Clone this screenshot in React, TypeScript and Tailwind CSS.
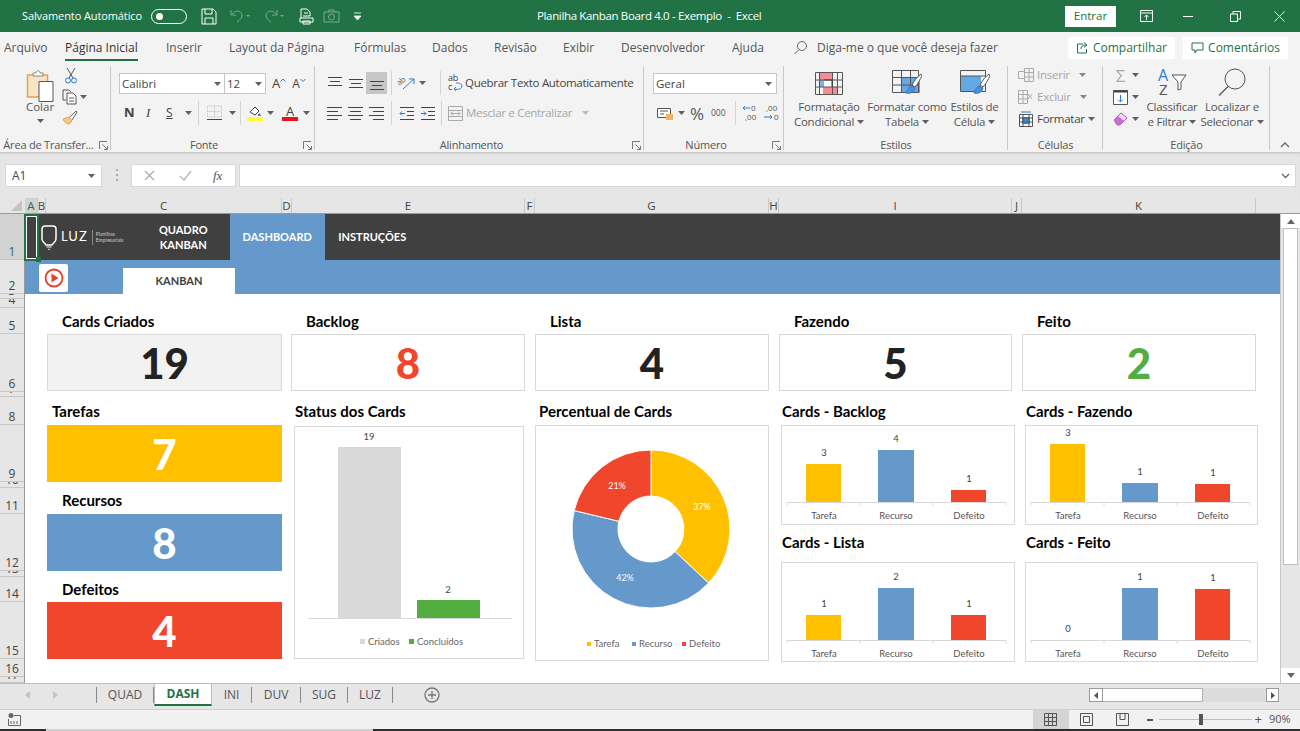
import type { ReactNode } from "react";

const BLUE = "#6598cb";
const YELLOW = "#ffc000";
const RED = "#f0462c";
const GREEN = "#52ae3e";

function Caret({ color = "#5f5f5f" }: { color?: string }) {
  return (
    <svg width="7" height="4" viewBox="0 0 7 4" className="shrink-0">
      <path d="M0 0h7L3.5 4z" fill={color} />
    </svg>
  );
}

function Launcher() {
  return (
    <svg width="9" height="9" viewBox="0 0 9 9" className="shrink-0">
      <path d="M.5 8V.5H8M5 8.5h3.5V5M3.5 3.5l4.5 4.5" fill="none" stroke="#777" />
    </svg>
  );
}

function AlignLeft() {
  return (
    <svg width="18" height="15" viewBox="0 0 18 15">
      <path d="M1 1.5h15M1 5.5h11M1 9.5h15M1 13.5h11" stroke="#444" fill="none" />
    </svg>
  );
}
function AlignCenter() {
  return (
    <svg width="18" height="15" viewBox="0 0 18 15">
      <path d="M1 1.5h15M3 5.5h11M1 9.5h15M3 13.5h11" stroke="#444" fill="none" />
    </svg>
  );
}
function AlignRight() {
  return (
    <svg width="18" height="15" viewBox="0 0 18 15">
      <path d="M1 1.5h15M5 5.5h11M1 9.5h15M5 13.5h11" stroke="#444" fill="none" />
    </svg>
  );
}

function Indent({ flip }: { flip?: boolean }) {
  return (
    <svg width="16" height="15" viewBox="0 0 16 15">
      <path d="M1 1.5h14M8 5.5h7M8 9.5h7M1 13.5h14" stroke="#444" fill="none" />
      <path d={flip ? "M1 7.5h5M4 5.5l2 2-2 2" : "M6 7.5H1M3 5.5l-2 2 2 2"} stroke="#2b7cd3" fill="none" />
    </svg>
  );
}

function CondFormatIcon() {
  return (
    <svg width="28" height="23" viewBox="0 0 28 23">
      <path d="M4 1h13v7H4zM8 15h14v7H8z" fill="#f58d97" />
      <path d="M4 8h5v7H4z" fill="#7cb2e4" />
      <path d="M9 8h8v7H9z" fill="#fff" />
      <path d="M.5.5h27v22H.5zM.5 8h27M.5 15h27M4.5.5v22M17.5.5v22M22.5.5v22" fill="none" stroke="#555" />
      <path d="M9 8h8v7" fill="none" stroke="#333" />
    </svg>
  );
}

function TableBrushIcon({ wide }: { wide?: boolean }) {
  return (
    <svg width="30" height="27" viewBox="0 0 30 27">
      <path d={wide ? "M1 6h20v16H1z" : "M10 7h18v16H10z"} fill="#66a8e6" />
      <path d={wide ? "M.5.5h25v21H.5zM.5 6h25" : "M.5.5h26v22H.5zM.5 7.5h26M.5 15h26M9.5.5v22M18.5.5v22"} fill="none" stroke="#555" />
      <path d="M29 4c-3 2-7 7-9 11l3 2c3-3 5-8 7-11z" fill="#fff" stroke="#555" />
      <path d="M19 16c-3 1-3 4-5 7 3 1 8 0 9-5z" fill="#4a90d9" stroke="#3a78b8" />
    </svg>
  );
}

function RibbonGroup({ label, w, pad, launcher, children }: { label: string; w: string; pad?: string; launcher?: boolean; children: ReactNode }) {
  return (
    <div className={`${w} relative flex h-full shrink-0 flex-col`}>
      <div className="h-[74px]">{children}</div>
      <div className={`flex h-[16px] items-center justify-center text-[11px] leading-none tracking-[-0.2px] whitespace-nowrap text-[#555] ${pad ?? ""}`}>{label}</div>
      {launcher && (
        <div className="absolute right-[3px] bottom-[2px]">
          <Launcher />
        </div>
      )}
      <div className="absolute top-[4px] right-0 bottom-[2px] w-px bg-[#c8c8c8]" />
    </div>
  );
}

function Sep() {
  return <div className="mx-[4px] h-[24px] w-px bg-[#d4d4d4]" />;
}

function BigButton({ icon, l1, l2, w }: { icon: ReactNode; l1: string; l2: string; w: string }) {
  return (
    <div className={`${w} flex flex-col items-center`}>
      <div className="flex h-[32px] items-center justify-center">{icon}</div>
      <div className="flex flex-col items-center text-[11.5px] leading-[15px] tracking-[-0.25px] whitespace-nowrap text-[#555]">
        <span>{l1}</span>
        <span className="flex items-center gap-[3px]">
          {l2}
          <Caret />
        </span>
      </div>
    </div>
  );
}

function TitleBar() {
  return (
    <div className="flex h-[32px] shrink-0 items-center bg-[#217346] text-white">
      <span className="ml-[22px] w-[129px] text-[11px] tracking-[-0.1px] whitespace-nowrap">Salvamento Automático</span>
      <div className="flex h-[15px] w-[36px] items-center rounded-full border border-white pl-[4px]">
        <div className="h-[7px] w-[7px] rounded-full bg-white" />
      </div>
      <svg width="16" height="17" viewBox="0 0 16 17" className="ml-[14px]">
        <path d="M1 1h11l3 3v12H1zM4 1v5h7V1M4 16v-6h8v6" fill="none" stroke="#fff" />
      </svg>
      <svg width="22" height="14" viewBox="0 0 22 14" className="ml-[12px] opacity-40">
        <path d="M3 5c3-4 9-4 10 1 0 3-2 5-5 7M2 1v5h5" fill="none" stroke="#fff" />
        <path d="M17 6h4l-2 2z" fill="#fff" />
      </svg>
      <svg width="22" height="14" viewBox="0 0 22 14" className="ml-[12px] opacity-40">
        <path d="M13 5C10 1 4 1 3 6c0 3 2 5 5 7M14 1v5H9" fill="none" stroke="#fff" />
        <path d="M17 6h4l-2 2z" fill="#fff" />
      </svg>
      <svg width="15" height="17" viewBox="0 0 15 17" className="ml-[14px]">
        <path d="M2 10V1h6l3 3v4M4 8h7M5 5h4" fill="none" stroke="#fff" />
        <path d="M1 10h13v4H1zM4 13h7v3H4z" fill="#217346" stroke="#fff" />
      </svg>
      <svg width="17" height="14" viewBox="0 0 17 14" className="ml-[9px] opacity-40">
        <path d="M1 3h15v10H1zM5 3l1-2h5l1 2" fill="none" stroke="#fff" />
        <circle cx="8.5" cy="8" r="3" fill="none" stroke="#fff" />
      </svg>
      <svg width="7" height="9" viewBox="0 0 7 9" className="ml-[14px]">
        <path d="M0 1h7M0 4h7l-3.5 4z" stroke="#fff" strokeWidth=".8" fill="#fff" />
      </svg>
      <div className="ml-[176px] w-[300px] text-[11.5px] tracking-[-0.35px] whitespace-pre">Planilha Kanban Board 4.0 - Exemplo  -  Excel</div>
      <div className="ml-[228px] flex h-[21px] w-[51px] items-center justify-center bg-white text-[11.5px] text-[#217346]">Entrar</div>
      <svg width="13" height="12" viewBox="0 0 13 12" className="ml-[24px]">
        <path d="M.5.5h12v11H.5zM.5 3h12M6.5 10V5M4.5 7l2-2 2 2" fill="none" stroke="#fff" />
      </svg>
      <div className="ml-[30px] h-px w-[10px] bg-white" />
      <svg width="11" height="11" viewBox="0 0 11 11" className="ml-[37px]">
        <path d="M.5 3h7v7.5h-7zM3 3V.5h7.5V8H8" fill="none" stroke="#fff" />
      </svg>
      <svg width="11" height="11" viewBox="0 0 11 11" className="ml-[33px]">
        <path d="M.5.5l10 10M10.5.5l-10 10" stroke="#fff" />
      </svg>
    </div>
  );
}

const tabs = [
  { name: "Arquivo", w: "w-[61px]" },
  { name: "Página Inicial", w: "w-[101px]", active: true },
  { name: "Inserir", w: "w-[63px]" },
  { name: "Layout da Página", w: "w-[125px]" },
  { name: "Fórmulas", w: "w-[78px]" },
  { name: "Dados", w: "w-[62px]" },
  { name: "Revisão", w: "w-[69px]" },
  { name: "Exibir", w: "w-[58px]" },
  { name: "Desenvolvedor", w: "w-[111px]" },
  { name: "Ajuda", w: "w-[61px]" },
];

function TabsBar() {
  return (
    <div className="flex h-[30px] shrink-0 items-center bg-[#f3f3f3] pt-[1px] pl-[4px] text-[12px] text-[#555]">
      {tabs.map((t) => (
        <div key={t.name} className={`${t.w} shrink-0`}>
          <span className={t.active ? "relative font-medium text-[#333]" : ""}>
            {t.name}
            {t.active && <span className="absolute right-0 -bottom-[5px] left-0 h-[2px] bg-[#217346]" />}
          </span>
        </div>
      ))}
      <svg width="15" height="15" viewBox="0 0 15 15" className="shrink-0">
        <circle cx="9" cy="6" r="4.5" fill="none" stroke="#666" />
        <path d="M6 9.5L1.5 14" stroke="#666" />
      </svg>
      <span className="ml-[9px] w-[251px] shrink-0 whitespace-nowrap">Diga-me o que você deseja fazer</span>
      <div className="flex h-[22px] w-[107px] shrink-0 items-center justify-center gap-[4px] bg-white font-medium text-[#217346]">
        <svg width="13" height="13" viewBox="0 0 13 13">
          <path d="M7 3H1.5v9h9V8M5 8c0-3 2-4 5-4M8 1.5l3 2.5-3 2.5" fill="none" stroke="#217346" />
        </svg>
        Compartilhar
      </div>
      <div className="ml-[8px] flex h-[22px] w-[105px] shrink-0 items-center justify-center gap-[4px] bg-white font-medium text-[#217346]">
        <svg width="13" height="12" viewBox="0 0 13 12">
          <path d="M1 1h11v7H6l-2 3V8H1z" fill="none" stroke="#217346" />
        </svg>
        Comentários
      </div>
    </div>
  );
}

function ClipboardGroup() {
  return (
    <RibbonGroup label="Área de Transfer..." w="w-[111px]" pad="pr-[14px]" launcher>
      <div className="flex">
        <div className="ml-[26px] flex w-[28px] flex-col items-center">
          <svg width="28" height="34" viewBox="0 0 28 34" className="mt-[7px]">
            <path d="M1.5 6h20v22h-20z" fill="#f7e3c5" stroke="#e6a24a" strokeWidth="1.5" />
            <path d="M7 6V4h3c0-3 4-3 4 0h3v3H7z" fill="#fff" stroke="#888" />
            <path d="M13 12.5h14v20H13z" fill="#fff" stroke="#555" />
          </svg>
          <span className="mt-[-4px] text-[11.5px] leading-[15px] text-[#555]">Colar</span>
          <div className="mt-[5px]">
            <Caret />
          </div>
        </div>
        <div className="ml-[8px] flex flex-col">
          <svg width="14" height="17" viewBox="0 0 14 17" className="mt-[5px] ml-[2px]">
            <path d="M3 1l6 10M11 1L5 11" stroke="#555" fill="none" />
            <circle cx="4" cy="13.5" r="2.5" fill="none" stroke="#2b7cd3" />
            <circle cx="10" cy="13.5" r="2.5" fill="none" stroke="#2b7cd3" />
          </svg>
          <div className="mt-[5px] flex items-center gap-[3px]">
            <svg width="15" height="16" viewBox="0 0 15 16">
              <path d="M1 1h6l2 2M1 1v10h3" fill="none" stroke="#555" />
              <path d="M5 4h6l3 3v8H5zM7 9h5M7 12h5" fill="#fff" stroke="#555" />
            </svg>
            <Caret />
          </div>
          <svg width="16" height="15" viewBox="0 0 16 15" className="mt-[5px]">
            <path d="M1 9l6-2 3 4-3 3c-2 0-5-2-6-5z" fill="#f5c78e" stroke="#e6a24a" />
            <path d="M8 7l6-6 1 1-5 8" fill="#fff" stroke="#666" />
          </svg>
        </div>
      </div>
    </RibbonGroup>
  );
}

function FontGroup() {
  return (
    <RibbonGroup label="Fonte" w="w-[204px]" pad="pr-[18px]" launcher>
      <div className="mt-[11px] ml-[8px] flex h-[21px] items-center text-[11.5px] text-[#444]">
        <div className="flex h-[21px] w-[106px] items-center justify-between border border-[#c6c6c6] bg-white px-[2px] pr-[3px]">
          Calibri <Caret />
        </div>
        <div className="flex h-[21px] w-[41px] items-center justify-between border border-l-0 border-[#c6c6c6] bg-white pr-[3px] pl-[2px]">
          12 <Caret />
        </div>
        <span className="ml-[6px] text-[13px] leading-none">A</span>
        <svg width="6" height="4" viewBox="0 0 6 4" className="mb-[8px]"><path d="M.5 3.5L3 1l2.5 2.5" fill="none" stroke="#2b7cd3" /></svg>
        <span className="ml-[6px] text-[12px] leading-none">A</span>
        <svg width="6" height="4" viewBox="0 0 6 4" className="mb-[8px]"><path d="M.5 1L3 3.5 5.5 1" fill="none" stroke="#2b7cd3" /></svg>
      </div>
      <div className="mt-[8px] ml-[8px] flex h-[22px] items-center text-[#444]">
        <span className="ml-[5px] w-[19px] text-[13px] font-bold">N</span>
        <span className="ml-[3px] w-[20px] font-['Liberation_Serif',serif] text-[13px] italic">I</span>
        <span className="w-[14px] text-[12px] underline">S</span>
        <div className="mr-[2px] ml-[5px]"><Caret /></div>
        <Sep />
        <svg width="17" height="16" viewBox="0 0 17 16" className="ml-[3px]">
          <path d="M1.5 1h14v11h-14zM8.5 1v11M1.5 6.5h14" stroke="#bbb" strokeDasharray="1 1" fill="none" />
          <path d="M1 14.5h15" stroke="#444" />
        </svg>
        <div className="ml-[6px]"><Caret /></div>
        <Sep />
        <div className="ml-[2px] flex flex-col items-center">
          <svg width="14" height="12" viewBox="0 0 14 12">
            <path d="M2 7l5-5 4 4-4 4z" fill="#fff" stroke="#444" />
            <path d="M11 8c1 1 2 2 2 3h-3c0-1 .5-2 1-3z" fill="#2b7cd3" />
          </svg>
          <div className="h-[4px] w-[16px] bg-[#ffff3c]" />
        </div>
        <div className="ml-[4px]"><Caret /></div>
        <div className="ml-[8px] flex flex-col items-center">
          <span className="text-[13px] leading-[12px]">A</span>
          <div className="h-[4px] w-[16px] bg-[#e6141e]" />
        </div>
        <div className="ml-[5px]"><Caret /></div>
      </div>
    </RibbonGroup>
  );
}

function AlignGroup() {
  return (
    <RibbonGroup label="Alinhamento" w="w-[329px]" pad="pr-[16px]" launcher>
      <div className="mt-[10px] ml-[9px] flex h-[22px] items-center text-[11.5px] tracking-[-0.3px] text-[#444]">
        <div className="flex w-[21px] justify-center">
          <svg width="18" height="15" viewBox="0 0 18 15"><path d="M2 1.5h14M4 5.5h10M2 9.5h14" stroke="#444" fill="none" /></svg>
        </div>
        <div className="flex w-[21px] justify-center">
          <svg width="18" height="15" viewBox="0 0 18 15"><path d="M2 3.5h14M4 7.5h10M2 11.5h14" stroke="#444" fill="none" /></svg>
        </div>
        <div className="flex h-[22px] w-[21px] items-center justify-center bg-[#c6c6c6]">
          <svg width="18" height="15" viewBox="0 0 18 15"><path d="M2 5.5h14M4 9.5h10M2 13.5h14" stroke="#444" fill="none" /></svg>
        </div>
        <Sep />
        <svg width="20" height="18" viewBox="0 0 20 18" className="ml-[1px]">
          <text x="0" y="10" fontSize="8" fill="#666" transform="rotate(-40 4 8)">ab</text>
          <path d="M6 15l11-10M12 5h5v5" stroke="#2b7cd3" fill="none" />
        </svg>
        <div className="ml-[2px]"><Caret /></div>
        <div className="mr-[7px] ml-[14px] h-[24px] w-px bg-[#d4d4d4]" />
        <svg width="15" height="18" viewBox="0 0 15 18">
          <text x="0" y="7" fontSize="9" fill="#444">ab</text>
          <text x="0" y="16" fontSize="9" fill="#444">c</text>
          <path d="M6 15c4 1 8 0 8-3 0-2-2-3-6-3M8 13l-2 2 2 2" fill="none" stroke="#2b7cd3" />
        </svg>
        <span className="ml-[2px] whitespace-nowrap">Quebrar Texto Automaticamente</span>
      </div>
      <div className="mt-[8px] ml-[9px] flex h-[22px] items-center text-[11.5px] tracking-[-0.3px] text-[#a6a6a6]">
        <div className="flex w-[21px] justify-center"><AlignLeft /></div>
        <div className="flex w-[21px] justify-center"><AlignCenter /></div>
        <div className="flex w-[21px] justify-center"><AlignRight /></div>
        <Sep />
        <div className="flex w-[21px] justify-center"><Indent /></div>
        <div className="flex w-[21px] justify-center"><Indent flip /></div>
        <div className="mx-[3px] h-[24px] w-px bg-[#d4d4d4]" />
        <svg width="15" height="15" viewBox="0 0 15 15" className="ml-[3px]">
          <path d="M.5.5h14v14H.5zM.5 4.5h14M.5 10.5h14M3 7.5h9M3 7.5l2-2M3 7.5l2 2M12 7.5l-2-2M12 7.5l-2 2" fill="none" stroke="#aaa" />
        </svg>
        <span className="ml-[3px] whitespace-nowrap">Mesclar e Centralizar</span>
        <div className="ml-[10px]"><Caret color="#bbb" /></div>
      </div>
    </RibbonGroup>
  );
}

function NumberGroup() {
  return (
    <RibbonGroup label="Número" w="w-[140px]" pad="pr-[16px]" launcher>
      <div className="mt-[11px] ml-[9px] flex h-[21px] w-[124px] items-center justify-between border border-[#c6c6c6] bg-white pr-[4px] pl-[2px] text-[11.5px] text-[#444]">
        Geral <Caret />
      </div>
      <div className="mt-[8px] ml-[13px] flex h-[22px] items-center text-[#555]">
        <svg width="17" height="15" viewBox="0 0 17 15">
          <path d="M.5 2.5h13v9H.5z" fill="#fff" stroke="#555" />
          <path d="M3 5h8M3 8h4" stroke="#555" />
          <path d="M9 8h7v6H9z" fill="#f5b25e" />
        </svg>
        <div className="ml-[4px]"><Caret /></div>
        <span className="ml-[5px] w-[20px] text-[17px] leading-none">%</span>
        <span className="ml-[1px] w-[20px] text-[8.5px]">000</span>
        <Sep />
        <svg width="20" height="18" viewBox="0 0 20 18" className="ml-[1px]">
          <text x="10" y="7" fontSize="8" fill="#555">0</text>
          <text x="4" y="16" fontSize="8" fill="#555">,00</text>
          <path d="M9 4H2M4 2L2 4l2 2" fill="none" stroke="#2b7cd3" />
        </svg>
        <svg width="20" height="18" viewBox="0 0 20 18" className="ml-[1px]">
          <text x="4" y="7" fontSize="8" fill="#555">,00</text>
          <text x="12" y="16" fontSize="8" fill="#555">0</text>
          <path d="M2 13h8M8 11l2 2-2 2" fill="none" stroke="#2b7cd3" />
        </svg>
      </div>
    </RibbonGroup>
  );
}

function StylesGroup() {
  return (
    <RibbonGroup label="Estilos" w="w-[224px]">
      <div className="mt-[5px] flex pl-[6px]">
        <BigButton w="w-[78px]" icon={<CondFormatIcon />} l1="Formatação" l2="Condicional" />
        <BigButton w="w-[78px]" icon={<TableBrushIcon />} l1="Formatar como" l2="Tabela" />
        <BigButton w="w-[57px]" icon={<TableBrushIcon wide />} l1="Estilos de" l2="Célula" />
      </div>
    </RibbonGroup>
  );
}

function CellRow({ label, dim, gap, children }: { label: string; dim?: boolean; gap: string; children: ReactNode }) {
  return (
    <div className={`flex h-[22px] items-center text-[11.5px] tracking-[-0.25px] ${dim ? "text-[#a6a6a6]" : "text-[#444]"}`}>
      {children}
      <span className="ml-[3px]">{label}</span>
      <div className={gap}><Caret color={dim ? "#888" : "#5f5f5f"} /></div>
    </div>
  );
}

function CellsGroup() {
  return (
    <RibbonGroup label="Células" w="w-[95px]">
      <div className="mt-[2px] ml-[10px] flex flex-col">
        <CellRow label="Inserir" dim gap="ml-[9px]">
          <svg width="16" height="14" viewBox="0 0 16 14">
            <path d="M6.5.5h9v13h-9zM6.5 4.5h9M6.5 9h9M11 .5v13" fill="none" stroke="#aaa" />
            <path d="M.5 3.5h6v7h-6z" fill="none" stroke="#aaa" />
          </svg>
        </CellRow>
        <CellRow label="Excluir" dim gap="ml-[9px]">
          <svg width="16" height="14" viewBox="0 0 16 14">
            <path d="M.5.5h9v13h-9zM.5 4.5h9M.5 9h9M5 .5v13" fill="none" stroke="#aaa" />
            <path d="M10 4l4 5M14 4l-4 5" stroke="#aaa" />
          </svg>
        </CellRow>
        <CellRow label="Formatar" gap="ml-[3px]">
          <svg width="16" height="16" viewBox="0 0 16 16">
            <path d="M1.5 3.5h13v12h-13z" fill="#fff" stroke="#555" />
            <path d="M4 6h8v7H4z" fill="#3b8fdc" />
            <path d="M1.5 7h13M1.5 11h13M5 3.5v12M11 3.5v12" stroke="#555" />
            <path d="M3 1h10" stroke="#2b7cd3" />
          </svg>
        </CellRow>
      </div>
    </RibbonGroup>
  );
}

function EditGroup() {
  return (
    <RibbonGroup label="Edição" w="w-[167px]">
      <div className="flex">
        <div className="mt-[2px] ml-[10px] flex w-[28px] flex-col">
          <div className="flex h-[22px] items-center gap-[4px]">
            <span className="w-[15px] text-center text-[17px] leading-none text-[#aaa]">Σ</span>
            <Caret />
          </div>
          <div className="flex h-[22px] items-center gap-[4px]">
            <svg width="15" height="15" viewBox="0 0 15 15">
              <path d="M.5.5h14v14H.5z" fill="#fff" stroke="#555" />
              <path d="M.5 1.5h14" stroke="#444" strokeWidth="2" />
              <path d="M7.5 5v7M5 9.5l2.5 2.5L10 9.5" fill="none" stroke="#2b7cd3" />
            </svg>
            <Caret />
          </div>
          <div className="flex h-[22px] items-center gap-[4px]">
            <svg width="15" height="14" viewBox="0 0 15 14">
              <path d="M1 8l7-7 6 5-7 7H4z" fill="#f5ddf3" stroke="#b24fc2" />
              <path d="M1 8l4-4 6 5-4 4H4z" fill="#c36ed0" />
            </svg>
            <Caret />
          </div>
        </div>
        <div className="flex w-[62px] flex-col items-center">
          <svg width="30" height="28" viewBox="0 0 30 28" className="mt-[6px]">
            <path d="M15 7h14l-5 7v7l-3 1v-8z" fill="#fff" stroke="#555" />
            <text x="1" y="13" fontSize="16" fill="#2b7cd3">A</text>
            <text x="2" y="27" fontSize="15" fill="#555">Z</text>
          </svg>
          <div className="mt-[3px] flex flex-col items-center text-[11.5px] leading-[15px] tracking-[-0.25px] whitespace-nowrap text-[#555]">
            <span>Classificar</span>
            <span className="flex items-center gap-[3px]">e Filtrar<Caret /></span>
          </div>
        </div>
        <div className="flex w-[58px] flex-col items-center">
          <svg width="28" height="28" viewBox="0 0 28 28" className="mt-[6px]">
            <circle cx="17" cy="11" r="10" fill="none" stroke="#555" />
            <path d="M10 18.5L1 27.5" stroke="#555" strokeWidth="1.3" />
          </svg>
          <div className="mt-[3px] flex flex-col items-center text-[11.5px] leading-[15px] tracking-[-0.25px] whitespace-nowrap text-[#555]">
            <span>Localizar e</span>
            <span className="flex items-center gap-[3px]">Selecionar<Caret /></span>
          </div>
        </div>
      </div>
    </RibbonGroup>
  );
}

function Ribbon() {
  return (
    <div className="relative flex h-[90px] shrink-0 bg-[#f3f3f3] font-['Open_Sans',sans-serif]">
      <ClipboardGroup />
      <FontGroup />
      <AlignGroup />
      <NumberGroup />
      <StylesGroup />
      <CellsGroup />
      <EditGroup />
      <svg width="10" height="6" viewBox="0 0 10 6" className="absolute right-[10px] bottom-[4px]">
        <path d="M1 5l4-4 4 4" fill="none" stroke="#666" strokeWidth="1.3" />
      </svg>
    </div>
  );
}

function FormulaBar() {
  return (
    <div className="flex h-[46px] shrink-0 items-start bg-[#e6e6e6] pt-[12px] pl-[5px] shadow-[inset_0_3px_3px_-2px_#bbb]">
      <div className="flex h-[23px] w-[97px] items-center justify-between border border-[#d8d8d8] bg-white pr-[6px] pl-[6px] text-[12px] text-[#444]">
        A1 <Caret />
      </div>
      <div className="mt-[5px] ml-[14px] flex h-[12px] w-[2px] flex-col justify-between">
        <div className="h-[2px] w-[2px] bg-[#aaa]" />
        <div className="h-[2px] w-[2px] bg-[#aaa]" />
        <div className="h-[2px] w-[2px] bg-[#aaa]" />
      </div>
      <div className="ml-[13px] flex h-[23px] w-[105px] items-center border border-[#d8d8d8] bg-white pl-[12px] text-[#999]">
        <svg width="11" height="11" viewBox="0 0 11 11">
          <path d="M1 1l9 9M10 1l-9 9" stroke="#aaa" strokeWidth="1.2" />
        </svg>
        <svg width="13" height="11" viewBox="0 0 13 11" className="ml-[24px]">
          <path d="M1 6l4 4 7-9" fill="none" stroke="#bbb" strokeWidth="1.5" />
        </svg>
        <span className="ml-[21px] font-['Liberation_Serif',serif] text-[13px] text-[#555] italic">fx</span>
      </div>
      <div className="ml-[3px] flex h-[23px] w-[1057px] items-center justify-end border border-[#d8d8d8] bg-white pr-[5px]">
        <svg width="9" height="6" viewBox="0 0 9 6"><path d="M1 1l3.5 3.5L8 1" fill="none" stroke="#666" strokeWidth="1.3" /></svg>
      </div>
    </div>
  );
}

const cols = [
  { n: "A", w: "w-[13px]", sel: true },
  { n: "B", w: "w-[8px]" },
  { n: "C", w: "w-[236px]" },
  { n: "D", w: "w-[10px]" },
  { n: "E", w: "w-[233px]" },
  { n: "F", w: "w-[10px]" },
  { n: "G", w: "w-[234px]" },
  { n: "H", w: "w-[10px]" },
  { n: "I", w: "w-[233px]" },
  { n: "J", w: "w-[10px]" },
  { n: "K", w: "w-[234px]" },
];

function ColumnHeaders() {
  return (
    <div className="flex h-[16px] shrink-0 border-b border-[#9a9a9a] bg-[#e6e6e6] text-[11.5px] leading-[15px] text-[#444]">
      <div className="flex w-[25px] items-end justify-end pr-[3px] pb-[2px]">
        <svg width="11" height="11" viewBox="0 0 11 11"><path d="M11 0v11H0z" fill="#c4c4c4" /></svg>
      </div>
      {cols.map((c) => (
        <div
          key={c.n}
          className={`${c.w} flex shrink-0 justify-center overflow-hidden border-r border-[#c8c8c8] ${c.sel ? "bg-[#d2d2d2] font-medium text-[#217346]" : ""}`}
        >
          {c.n}
        </div>
      ))}
    </div>
  );
}

const rows = [
  { n: 1, h: "h-[46px]", sel: true },
  { n: 2, h: "h-[34px]" },
  { n: 3, h: "h-[5px]" },
  { n: 4, h: "h-[9px]" },
  { n: 5, h: "h-[26px]" },
  { n: 6, h: "h-[58px]" },
  { n: 7, h: "h-[5px]" },
  { n: 8, h: "h-[28px]" },
  { n: 9, h: "h-[57px]" },
  { n: 10, h: "h-[6px]" },
  { n: 11, h: "h-[26px]" },
  { n: 12, h: "h-[57px]" },
  { n: 13, h: "h-[6px]" },
  { n: 14, h: "h-[25px]" },
  { n: 15, h: "h-[57px]" },
  { n: 16, h: "h-[18px]" },
  { n: 17, h: "h-[6px]" },
];

function RowHeaders() {
  return (
    <div className="flex w-[25px] shrink-0 flex-col overflow-hidden border-r border-[#9a9a9a] bg-[#e6e6e6] text-[12px] text-[#444]">
      {rows.map((r) => (
        <div
          key={r.n}
          className={`${r.h} flex shrink-0 items-end justify-center overflow-hidden border-b border-[#c8c8c8] leading-[14px] ${r.sel ? "bg-[#d2d2d2] text-[#217346]" : ""}`}
        >
          {r.n}
        </div>
      ))}
    </div>
  );
}

function NavBars() {
  return (
    <>
      <div className="flex h-[46px] shrink-0 items-center bg-[#404040] font-bold text-white">
        <svg width="16" height="25" viewBox="0 0 16 25" className="ml-[16px]">
          <path d="M4 1h8a3 3 0 0 1 3 3v10c0 3-3 4-4 6H5c-1-2-4-3-4-6V4a3 3 0 0 1 3-3z" fill="none" stroke="#fff" strokeWidth="1.5" />
          <path d="M5.5 22h5M7 24.5h2" stroke="#bbb" strokeWidth="1.3" />
        </svg>
        <span className="ml-[4px] text-[13px] font-normal tracking-[1px]">LUZ</span>
        <div className="ml-[4px] h-[15px] w-px bg-[#888]" />
        <div className="ml-[3px] flex w-[50px] flex-col text-[5px] leading-[6px] font-normal text-[#ccc]">
          <span>Planilhas</span>
          <span>Empresariais</span>
        </div>
        <div className="-ml-[1px] flex w-[77px] flex-col items-center text-[11px] leading-[15px]">
          <span>QUADRO</span>
          <span>KANBAN</span>
        </div>
        <div className="ml-[8px] flex h-full w-[95px] items-center justify-center bg-[#6598cb] text-[11px]">DASHBOARD</div>
        <div className="w-[95px] text-center text-[11px]">INSTRUÇÕES</div>
      </div>
      <div className="flex h-[34px] shrink-0 bg-[#6598cb]">
        <div className="mt-[4px] ml-[14px] flex h-[28px] w-[29px] items-center justify-center rounded-[2px] bg-white">
          <svg width="20" height="20" viewBox="0 0 20 20">
            <circle cx="10" cy="10" r="8.5" fill="none" stroke="#e6402e" strokeWidth="1.8" />
            <path d="M7.5 5.5l7 4.5-7 4.5z" fill="#e6402e" />
          </svg>
        </div>
        <div className="mt-[8px] ml-[55px] flex h-[26px] w-[112px] items-center justify-center bg-white text-[11px] font-bold text-[#404040]">
          KANBAN
        </div>
      </div>
    </>
  );
}

function StatCard({ label, value, color, w, bg }: { label: string; value: number; color: string; w: string; bg?: string }) {
  return (
    <div className={`${w} shrink-0`}>
      <div className="flex h-[26px] items-center pl-[15px] text-[15px] font-bold text-black">{label}</div>
      <div className={`flex h-[57px] items-center justify-center border border-[#d9d9d9] text-[42px] leading-none font-black ${bg ?? "bg-white"} ${color}`}>
        {value}
      </div>
    </div>
  );
}

function ColorCard({ label, value, bg, labelPad, labelH }: { label: string; value: number; bg: string; labelPad: string; labelH: string }) {
  return (
    <>
      <div className={`${labelH} flex items-center ${labelPad} text-[15px] font-bold text-black`}>{label}</div>
      <div className={`flex h-[57px] items-center justify-center text-[42px] leading-none font-black text-white ${bg}`}>{value}</div>
    </>
  );
}

function StatusChart() {
  return (
    <svg width="228" height="231" viewBox="0 0 228 231" className="block">
      <rect x="43" y="20" width="63" height="171" fill="#d9d9d9" />
      <rect x="122" y="173" width="63" height="18" fill={GREEN} />
      <path d="M13 191.5h204" stroke="#d9d9d9" />
      <text x="74" y="13" textAnchor="middle" fontSize="9.5" fill="#444">19</text>
      <text x="153" y="166" textAnchor="middle" fontSize="9.5" fill="#444">2</text>
      <rect x="65" y="212" width="5" height="5" fill="#d9d9d9" />
      <text x="73" y="218" fontSize="9.5" fill="#666">Criados</text>
      <rect x="114" y="212" width="5" height="5" fill={GREEN} />
      <text x="122" y="218" fontSize="9.5" fill="#666">Concluídos</text>
    </svg>
  );
}

function arc(cx: number, cy: number, r0: number, r1: number, from: number, to: number) {
  const pt = (r: number, a: number) => {
    const t = (a * 2 - 0.5) * Math.PI;
    return `${cx + r * Math.cos(t)} ${cy + r * Math.sin(t)}`;
  };
  const big = to - from > 0.5 ? 1 : 0;
  return `M${pt(r1, from)}A${r1} ${r1} 0 ${big} 1 ${pt(r1, to)}L${pt(r0, to)}A${r0} ${r0} 0 ${big} 0 ${pt(r0, from)}Z`;
}

function Donut() {
  const cx = 115;
  const cy = 103;
  return (
    <svg width="232" height="234" viewBox="0 0 232 234" className="block">
      <path d={arc(cx, cy, 33, 79, 0, 0.37)} fill={YELLOW} stroke="#fff" />
      <path d={arc(cx, cy, 33, 79, 0.37, 0.7875)} fill={BLUE} stroke="#fff" />
      <path d={arc(cx, cy, 33, 79, 0.7875, 1)} fill={RED} stroke="#fff" />
      <text x="166" y="84" textAnchor="middle" fontSize="9" fill="#fff">37%</text>
      <text x="89" y="155" textAnchor="middle" fontSize="9" fill="#fff">42%</text>
      <text x="81" y="63" textAnchor="middle" fontSize="9" fill="#fff">21%</text>
      <rect x="51" y="216" width="4" height="4" fill={YELLOW} />
      <text x="58" y="221" fontSize="9.5" fill="#666">Tarefa</text>
      <rect x="96" y="216" width="4" height="4" fill={BLUE} />
      <text x="103" y="221" fontSize="9.5" fill="#666">Recurso</text>
      <rect x="146" y="216" width="4" height="4" fill={RED} />
      <text x="153" y="221" fontSize="9.5" fill="#666">Defeito</text>
    </svg>
  );
}

function MiniChart({ base, tops, values }: { base: number; tops: number[]; values: number[] }) {
  const bars = [
    { x: 24, w: 35, c: YELLOW, n: "Tarefa", tx: 42 },
    { x: 96, w: 36, c: BLUE, n: "Recurso", tx: 114 },
    { x: 169, w: 35, c: RED, n: "Defeito", tx: 187 },
  ];
  return (
    <svg width="232" height="98" viewBox="0 0 232 98" className="block">
      {bars.map((b, i) => (
        <g key={b.n}>
          {values[i] > 0 && <rect x={b.x} y={tops[i]} width={b.w} height={base - tops[i]} fill={b.c} />}
          <text x={b.tx} y={tops[i] - 8} textAnchor="middle" fontSize="9.5" fill="#444">{values[i]}</text>
          <text x={b.tx} y={base + 17} textAnchor="middle" fontSize="9.5" fill="#555">{b.n}</text>
        </g>
      ))}
      <path d={`M5 ${base + 3.5}V${base + 0.5}H224V${base + 3.5}M78 ${base + 0.5}v3M151 ${base + 0.5}v3`} fill="none" stroke="#d9d9d9" />
    </svg>
  );
}

function ChartTitle({ children, h }: { children: ReactNode; h: string }) {
  return <div className={`${h} flex items-center text-[15px] font-bold text-black`}>{children}</div>;
}

function Dashboard() {
  return (
    <div className="flex-1 bg-white pl-[22px] font-['Lato',sans-serif]">
      <div className="flex pt-[14px]">
        <StatCard label="Cards Criados" value={19} color="text-[#222]" w="w-[235px]" bg="bg-[#f2f2f2]" />
        <StatCard label="Backlog" value={8} color="text-[#f0462c]" w="ml-[9px] w-[234px]" />
        <StatCard label="Lista" value={4} color="text-[#222]" w="ml-[10px] w-[234px]" />
        <StatCard label="Fazendo" value={5} color="text-[#222]" w="ml-[10px] w-[233px]" />
        <StatCard label="Feito" value={2} color="text-[#52ae3e]" w="ml-[10px] w-[234px]" />
      </div>
      <div className="mt-[6px] flex">
        <div className="w-[235px] shrink-0">
          <ColorCard label="Tarefas" value={7} bg="bg-[#ffc000]" labelPad="pl-[5px]" labelH="h-[28px]" />
          <ColorCard label="Recursos" value={8} bg="bg-[#6598cb]" labelPad="pt-[4px] pl-[15px]" labelH="h-[32px]" />
          <ColorCard label="Defeitos" value={4} bg="bg-[#f0462c]" labelPad="pt-[5px] pl-[15px]" labelH="h-[31px]" />
        </div>
        <div className="ml-[12px] w-[230px] shrink-0">
          <ChartTitle h="h-[29px]"><span className="pl-[1px]">Status dos Cards</span></ChartTitle>
          <div className="h-[233px] border border-[#d9d9d9]"><StatusChart /></div>
        </div>
        <div className="ml-[11px] w-[234px] shrink-0">
          <ChartTitle h="h-[28px]"><span className="pl-[4px]">Percentual de Cards</span></ChartTitle>
          <div className="h-[236px] border border-[#d9d9d9]"><Donut /></div>
        </div>
        <div className="ml-[12px] w-[234px] shrink-0">
          <ChartTitle h="h-[28px]"><span className="pl-[1px]">Cards - Backlog</span></ChartTitle>
          <div className="h-[100px] border border-[#d9d9d9]"><MiniChart base={76} tops={[38, 24, 64]} values={[3, 4, 1]} /></div>
          <ChartTitle h="h-[37px]"><span className="pb-[2px] pl-[1px]">Cards - Lista</span></ChartTitle>
          <div className="h-[100px] border border-[#d9d9d9]"><MiniChart base={77} tops={[52, 25, 52]} values={[1, 2, 1]} /></div>
        </div>
        <div className="ml-[10px] w-[233px] shrink-0">
          <ChartTitle h="h-[28px]"><span className="pl-[1px]">Cards - Fazendo</span></ChartTitle>
          <div className="h-[100px] border border-[#d9d9d9]"><MiniChart base={76} tops={[18, 57, 58]} values={[3, 1, 1]} /></div>
          <ChartTitle h="h-[37px]"><span className="pb-[2px] pl-[1px]">Cards - Feito</span></ChartTitle>
          <div className="h-[100px] border border-[#d9d9d9]"><MiniChart base={77} tops={[77, 25, 26]} values={[0, 1, 1]} /></div>
        </div>
      </div>
    </div>
  );
}

function VerticalScroll() {
  return (
    <div className="flex w-[20px] shrink-0 flex-col border-l border-[#c8c8c8] bg-[#e6e6e6]">
      <div className="flex h-[14px] items-center justify-center bg-white">
        <svg width="8" height="5" viewBox="0 0 8 5"><path d="M0 5l4-5 4 5z" fill="#666" /></svg>
      </div>
      <div className="mx-[2px] h-[337px] border border-[#c0c0c0] bg-white" />
      <div className="flex-1" />
      <div className="flex h-[15px] items-center justify-center bg-white">
        <svg width="8" height="5" viewBox="0 0 8 5"><path d="M0 0l4 5 4-5z" fill="#666" /></svg>
      </div>
    </div>
  );
}

const sheetTabs = [
  { n: "QUAD", cls: "w-[58px] border-l" },
  { n: "DASH", cls: "" },
  { n: "INI", cls: "w-[40px]" },
  { n: "DUV", cls: "w-[49px]" },
  { n: "SUG", cls: "w-[47px]" },
  { n: "LUZ", cls: "w-[45px]" },
];

function SheetTabs() {
  return (
    <div className="flex h-[26px] shrink-0 items-center border-t border-[#bdbdbd] bg-[#e6e6e6] pb-[3px] text-[12px] text-[#555]">
      <div className="flex w-[96px] shrink-0 items-center pl-[25px]">
        <svg width="6" height="8" viewBox="0 0 6 8"><path d="M5 0L0 4l5 4z" fill="#c4c4c4" /></svg>
        <svg width="6" height="8" viewBox="0 0 6 8" className="ml-[21px]"><path d="M1 0l5 4-5 4z" fill="#c4c4c4" /></svg>
      </div>
      {sheetTabs.map((t) => (
        <div
          key={t.n}
          className={
            t.n === "DASH"
              ? "flex h-[22px] w-[58px] items-center justify-center border-x border-[#bdbdbd] border-b-2 border-b-[#217346] bg-white font-bold text-[#217346]"
              : `flex h-[16px] items-center justify-center border-r border-[#888] ${t.cls}`
          }
        >
          {t.n}
        </div>
      ))}
      <svg width="16" height="16" viewBox="0 0 16 16" className="ml-[31px] shrink-0">
        <circle cx="8" cy="8" r="7" fill="none" stroke="#777" strokeWidth="1.3" />
        <path d="M4 8h8M8 4v8" stroke="#777" strokeWidth="1.3" />
      </svg>
      <div className="ml-auto flex items-center pr-[21px]">
        <div className="flex h-[14px] w-[14px] items-center justify-center border border-[#999] bg-white">
          <svg width="4" height="7" viewBox="0 0 4 7"><path d="M4 0L0 3.5 4 7z" fill="#555" /></svg>
        </div>
        <div className="h-[14px] w-[100px] border-y border-r border-[#b0b0b0] bg-white" />
        <div className="h-[14px] w-[63px] bg-[#dcdcdc]" />
        <div className="flex h-[14px] w-[13px] items-center justify-center border border-[#999] bg-white">
          <svg width="4" height="7" viewBox="0 0 4 7"><path d="M0 0l4 3.5L0 7z" fill="#555" /></svg>
        </div>
      </div>
    </div>
  );
}

function StatusBar() {
  return (
    <div className="flex h-[20px] shrink-0 items-center border-t border-[#d0d0d0] bg-[#f1f1f1] pl-[8px] text-[11px] text-[#555]">
      <svg width="13" height="13" viewBox="0 0 13 13">
        <circle cx="3" cy="2.5" r="2.5" fill="#666" />
        <path d="M6 2.5h6.5v10H.5V6M3 8v3M6 8v3M9 8v3" fill="none" stroke="#666" />
      </svg>
      <div className="ml-auto flex h-full items-center">
        <div className="flex h-full w-[36px] items-center justify-center bg-[#d4d4d4]">
          <svg width="13" height="13" viewBox="0 0 13 13"><path d="M.5.5h12v12H.5zM.5 4.5h12M.5 8.5h12M4.5.5v12M8.5.5v12" fill="none" stroke="#555" /></svg>
        </div>
        <svg width="13" height="13" viewBox="0 0 13 13" className="ml-[11px]"><path d="M.5.5h12v12H.5zM3.5 3.5h6v6h-6z" fill="none" stroke="#555" /></svg>
        <svg width="13" height="13" viewBox="0 0 13 13" className="ml-[23px]"><path d="M.5.5h12v12H.5zM4 .5v6h5v-6" fill="none" stroke="#555" /></svg>
        <div className="ml-[18px] h-[2px] w-[6px] bg-[#555]" />
        <div className="relative ml-[6px] h-px w-[93px] bg-[#bbb]">
          <div className="absolute -top-[5px] left-[40px] h-[11px] w-[4px] bg-[#555]" />
        </div>
        <span className="ml-[3px] text-[13px] leading-none">+</span>
        <span className="ml-[7px] w-[31px] text-[11px]">90%</span>
      </div>
    </div>
  );
}

export default function App() {
  return (
    <div className="flex h-[731px] w-[1300px] flex-col overflow-hidden bg-[#e6e6e6] font-['Open_Sans',sans-serif]">
      <TitleBar />
      <TabsBar />
      <Ribbon />
      <FormulaBar />
      <ColumnHeaders />
      <div className="relative flex h-[469px] shrink-0 overflow-hidden">
        <RowHeaders />
        <div className="flex w-[1255px] shrink-0 flex-col font-['Lato',sans-serif]">
          <NavBars />
          <Dashboard />
        </div>
        <VerticalScroll />
        <div className="absolute top-0 left-[24px] h-[47px] w-[15px] border-2 border-[#217346] shadow-[inset_0_0_0_1px_#fff]" />
        <div className="absolute top-[43px] left-[36px] h-[5px] w-[5px] bg-[#217346]" />
      </div>
      <SheetTabs />
      <StatusBar />
      <div className="flex h-[2px] shrink-0">
        <div className="w-[46px] bg-[#2b2b2b]" />
        <div className="w-[327px] bg-[#d0d0d0]" />
        <div className="flex-1 bg-[#2b2b2b]" />
      </div>
    </div>
  );
}
